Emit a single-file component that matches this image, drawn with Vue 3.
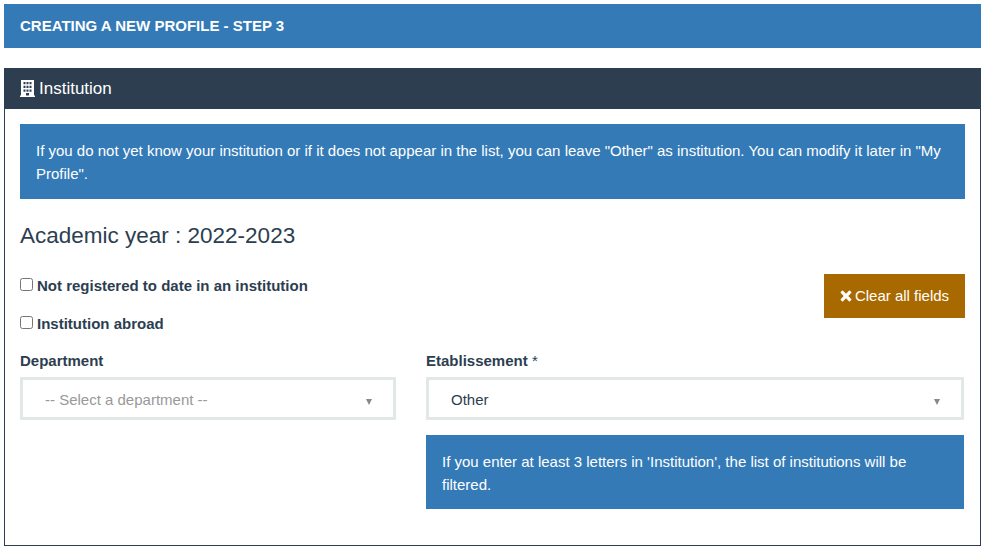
<script setup>
import { ref } from 'vue';

const notRegistered = ref(false);
const abroad = ref(false);
</script>

<template>
  <div class="page">
    <div class="banner">CREATING A NEW PROFILE - STEP 3</div>

    <section class="panel">
      <header class="panel__head">
        <svg class="building" viewBox="0 0 15 17" width="15" height="17">
          <path fill="#fff" fill-rule="evenodd" d="M1 0h13v15.5h1V17H0v-1.500h1zM3.500 2v2.200h2V2zm3 0v2.200h2V2zm3 0v2.200h2V2zM3.500 5.800V8h2V5.800zm3 0V8h2V5.800zm3 0V8h2V5.800zM3.500 9.600v2.200h2V9.600zm3 0v2.200h2V9.600zm3 0v2.200h2V9.600zM6 13v2.500h3V13z" />
        </svg>
        <span>Institution</span>
      </header>

      <div class="panel__body">
        <div class="alert">
          If you do not yet know your institution or if it does not appear in the list, you can leave "Other" as institution. You can modify it later in "My Profile".
        </div>

        <h3 class="year">Academic year : 2022-2023</h3>

        <div class="options">
          <div class="checks">
            <label class="check">
              <input type="checkbox" v-model="notRegistered">
              Not registered to date in an institution
            </label>
            <label class="check">
              <input type="checkbox" v-model="abroad">
              Institution abroad
            </label>
          </div>
          <button class="clear">
            <svg viewBox="0 0 12 12" width="12" height="12">
              <path fill="#fff" d="M3.1.8 6 3.700 8.900.8a.8.8 0 0 1 1.100 0l1.200 1.200a.8.8 0 0 1 0 1.100L8.300 6l2.900 2.900a.8.8 0 0 1 0 1.100L10 11.200a.8.8 0 0 1-1.100 0L6 8.300l-2.900 2.900a.8.8 0 0 1-1.100 0L.8 10a.8.8 0 0 1 0-1.100L3.700 6 .8 3.100a.8.8 0 0 1 0-1.100L2 .8a.8.8 0 0 1 1.100 0z" />
            </svg>
            Clear all fields
          </button>
        </div>

        <div class="fields">
          <div class="field field--left">
            <div class="field__label">Department</div>
            <div class="select select--empty">
              <span>-- Select a department --</span>
              <i class="arrow"></i>
            </div>
          </div>
          <div class="field field--right">
            <div class="field__label">Etablissement <span class="star">*</span></div>
            <div class="select">
              <span>Other</span>
              <i class="arrow"></i>
            </div>
            <div class="alert alert--small">
              If you enter at least 3 letters in 'Institution', the list of institutions will be filtered.
            </div>
          </div>
        </div>
      </div>
    </section>
  </div>
</template>

<style>
html, body {
  margin: 0;
  background: #fff;
}
</style>

<style scoped>
.page {
  padding: 4px 3px 0 4px;
  font-family: "Liberation Sans", Arial, sans-serif;
  font-size: 15px;
  color: #2c3e50;
}
.banner {
  height: 44px;
  line-height: 43px;
  padding-left: 16px;
  background: #337ab7;
  color: #fff;
  font-weight: 700;
  font-size: 15px;
}
.panel {
  margin-top: 20px;
}
.panel__head {
  height: 41px;
  display: flex;
  align-items: center;
  gap: 4px;
  padding-left: 16px;
  background: #2c3e50;
  color: #fff;
  font-size: 17px;
}
.building {
  flex: none;
  margin-top: -1px;
}
.panel__body {
  border: 1px solid #2c3e50;
  border-top: 0;
  padding: 15px 15px 36px;
  height: 437px;
  box-sizing: border-box;
}
.alert {
  background: #337ab7;
  color: #fff;
  padding: 16px 16px 0;
  line-height: 22.5px;
  height: 75px;
  box-sizing: border-box;
}
.year {
  margin: 23px 0 0;
  font-size: 22.5px;
  font-weight: 400;
  line-height: 28px;
}
.options {
  display: flex;
  justify-content: space-between;
  margin-top: 24px;
}
.checks {
  display: flex;
  flex-direction: column;
  gap: 18px;
  padding-top: 2px;
}
.check {
  display: flex;
  align-items: center;
  gap: 4px;
  font-weight: 700;
  line-height: 20px;
}
.check input {
  margin: -3px 0 0;
  width: 13px;
  height: 13px;
}
.clear {
  width: 141px;
  height: 44px;
  padding: 0 0 2px;
  border: 0;
  background: #a86a00;
  color: #fff;
  font: 15px "Liberation Sans", Arial, sans-serif;
  display: flex;
  align-items: center;
  justify-content: center;
  gap: 3px;
}
.clear svg {
  margin-top: 2px;
}
.fields {
  display: flex;
  margin-top: 17px;
}
.field--left {
  width: 376px;
  margin-right: 30px;
}
.field--right {
  width: 538px;
}
.field__label {
  font-weight: 700;
  line-height: 20px;
  margin-bottom: 6px;
}
.star {
  font-weight: 400;
}
.select {
  height: 43px;
  box-sizing: border-box;
  border: 3px solid #e2e8e8;
  display: flex;
  align-items: center;
  justify-content: space-between;
  padding: 2px 21px 0 22px;
  background: #fff;
}
.select--empty {
  color: #999;
}
.arrow {
  width: 0;
  height: 0;
  border-left: 3.5px solid transparent;
  border-right: 3.5px solid transparent;
  border-top: 6px solid #888;
  margin-top: 4px;
}
.alert--small {
  margin-top: 15px;
  height: 74px;
}
</style>
